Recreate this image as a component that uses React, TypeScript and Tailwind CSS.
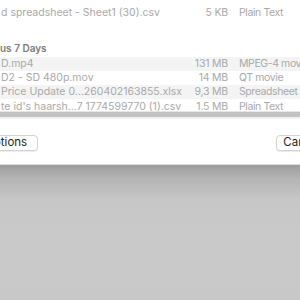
import React from "react";

const recent = [
  { name: "D.mp4", size: "131 MB", kind: "MPEG-4 movie", shaded: true },
  { name: "D2 - SD 480p.mov", size: "14 MB", kind: "QT movie", shaded: false },
  { name: "Price Update 0…260402163855.xlsx", size: "9,3 MB", kind: "Spreadsheet", shaded: true },
  { name: "te id's haarsh…7 1774599770 (1).csv", size: "1.5 MB", kind: "Plain Text", shaded: false },
];

function FileRow({ name, size, kind, shaded, last }: { name: string; size: string; kind: string; shaded?: boolean; last?: boolean }) {
  return (
    <div
      className={`flex whitespace-nowrap text-[10.5px] text-[#a9a9a9] ${last ? "h-[12px] items-start" : "h-[14px] items-center"} ${
        shaded ? "bg-[#f4f4f4]" : "bg-white"
      }`}
    >
      <span className="w-[180px] shrink-0 pl-[1px]">{name}</span>
      <span className="w-[48px] shrink-0 text-right tracking-[-0.2px]">{size}</span>
      <span className="ml-[11px] shrink-0 tracking-[-0.4px]">{kind}</span>
    </div>
  );
}

export default function App() {
  return (
    <div className="flex h-[300px] w-[300px] flex-col overflow-hidden bg-white font-['Inter',sans-serif]">
      {/* Dialog */}
      <div className="flex h-[164px] shrink-0 flex-col bg-white">
        <div className="mt-[6px]">
          <FileRow name="d spreadsheet - Sheet1 (30).csv" size="5 KB" kind="Plain Text" />
        </div>
        <div className="mt-[21px] flex h-[14px] items-center text-[10px] font-semibold text-[#7b7b7b]">us 7 Days</div>
        <div className="mt-[2px]">
          {recent.map((f, i) => (
            <FileRow key={f.name} {...f} last={i === recent.length - 1} />
          ))}
        </div>
        {/* horizontal scroller */}
        <div className="flex h-[8px] flex-col border-t border-[#e6e6e6] bg-[#f1f1f1]">
          <div className="h-[5px] bg-[#c2c2c2]" />
        </div>
        <div className="mt-auto mb-[13px] flex items-center justify-between">
          <button className="-ml-[22px] flex h-[16px] items-center rounded-[4px] border border-[#d2d2d2] bg-white pl-[6px] pr-[10px] text-[11.5px] text-[#222] shadow-[0_1px_1px_rgba(0,0,0,0.08)]">
            Options
          </button>
          <button className="-mr-[28px] flex h-[16px] items-center rounded-[4px] border border-[#d2d2d2] bg-white px-[6px] text-[11.5px] text-[#222] shadow-[0_1px_1px_rgba(0,0,0,0.08)]">
            Cancel
          </button>
        </div>
      </div>
      {/* Desktop below */}
      <div className="flex-1 border-t border-[#dcdcdc] bg-[linear-gradient(to_bottom,#9d9d9d_0px,#b5b5b5_14px,#c6c7c6_36px,#c9c9c9_80px,#c8c8c8_136px)]" />
    </div>
  );
}
